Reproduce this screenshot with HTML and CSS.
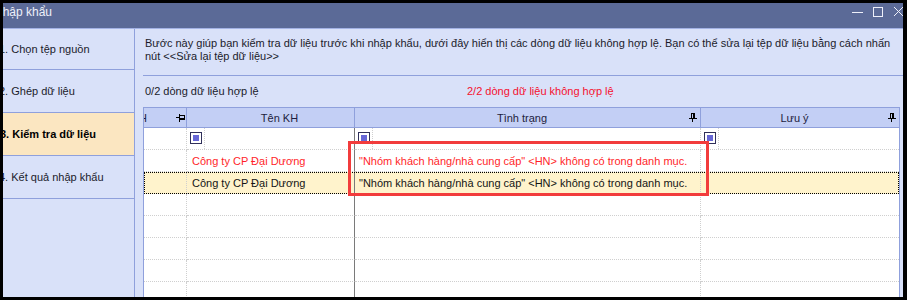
FILE: index.html
```html
<!DOCTYPE html>
<html lang="vi">
<head>
<meta charset="utf-8">
<title>Nhập khẩu</title>
<link rel="stylesheet" href="styles.css">
</head>
<body>
<div class="window">
  <div class="titlebar">
    <span class="title">Nhập khẩu</span>
    <svg class="controls" width="51" height="11" viewBox="0 0 51 11">
      <line x1="0" y1="5.5" x2="11" y2="5.5" stroke="#eef0fa" stroke-width="1"/>
      <rect x="21.5" y="0.5" width="9" height="9" fill="none" stroke="#eef0fa" stroke-width="1"/>
      <path d="M42 0 L51 9 M51 0 L42 9" stroke="#eef0fa" stroke-width="1"/>
    </svg>
  </div>
  <div class="title-sep"></div>
  <div class="main">
    <nav class="nav">
      <div class="nav-item first">1. Chọn tệp nguồn</div>
      <div class="nav-item">2. Ghép dữ liệu</div>
      <div class="nav-item active">3. Kiểm tra dữ liệu</div>
      <div class="nav-item">4. Kết quả nhập khẩu</div>
    </nav>
    <section class="content">
      <p class="desc">Bước này giúp bạn kiểm tra dữ liệu trước khi nhập khẩu, dưới đây hiển thị các dòng dữ liệu không hợp lệ. Bạn có thể sửa lại tệp dữ liệu bằng cách nhấn<br>nút &lt;&lt;Sửa lại tệp dữ liệu&gt;&gt;</p>
      <div class="sep"></div>
      <div class="stats">
        <span class="ok">0/2 dòng dữ liệu hợp lệ</span>
        <span class="bad">2/2 dòng dữ liệu không hợp lệ</span>
      </div>
      <div class="grid">
        <div class="row head">
          <div class="hcell c1">
            <span class="cut">H</span>
            <svg class="hpin" width="9" height="8" viewBox="0 0 9 8">
              <rect x="0" y="3" width="3" height="1"/>
              <rect x="3" y="0" width="1" height="8"/>
              <rect x="4" y="1" width="5" height="1"/>
              <rect x="8" y="1" width="1" height="4"/>
              <rect x="4" y="4" width="5" height="2"/>
            </svg>
          </div>
          <div class="hcell c2"><span class="htext name">Tên KH</span></div>
          <div class="hcell c3">
            <span class="htext">Tình trạng</span>
            <svg class="pin" width="8" height="9" viewBox="0 0 8 9">
              <rect x="2" y="0" width="4" height="1"/>
              <rect x="2" y="0" width="1" height="5"/>
              <rect x="4" y="0" width="2" height="5"/>
              <rect x="0" y="5" width="8" height="1"/>
              <rect x="3" y="6" width="1" height="3"/>
            </svg>
          </div>
          <div class="hcell c4">
            <span class="htext">Lưu ý</span>
            <svg class="pin" width="8" height="9" viewBox="0 0 8 9">
              <rect x="2" y="0" width="4" height="1"/>
              <rect x="2" y="0" width="1" height="5"/>
              <rect x="4" y="0" width="2" height="5"/>
              <rect x="0" y="5" width="8" height="1"/>
              <rect x="3" y="6" width="1" height="3"/>
            </svg>
          </div>
        </div>
        <div class="row filter">
          <div class="cell c1"></div>
          <div class="cell c2"><div class="fcell"><span class="chk"></span></div></div>
          <div class="cell c3"><div class="fcell"><span class="chk"></span></div></div>
          <div class="cell c4"><div class="fcell"><span class="chk"></span></div></div>
        </div>
        <div class="row err">
          <div class="cell c1"></div>
          <div class="cell c2">Công ty CP Đại Dương</div>
          <div class="cell c3">"Nhóm khách hàng/nhà cung cấp" &lt;HN&gt; không có trong danh mục.</div>
          <div class="cell c4"></div>
        </div>
        <div class="row selected">
          <div class="cell c1"></div>
          <div class="cell c2">Công ty CP Đại Dương</div>
          <div class="cell c3">"Nhóm khách hàng/nhà cung cấp" &lt;HN&gt; không có trong danh mục.</div>
          <div class="cell c4"></div>
        </div>
        <div class="row"><div class="cell c1"></div><div class="cell c2"></div><div class="cell c3"></div><div class="cell c4"></div></div>
        <div class="row"><div class="cell c1"></div><div class="cell c2"></div><div class="cell c3"></div><div class="cell c4"></div></div>
        <div class="row"><div class="cell c1"></div><div class="cell c2"></div><div class="cell c3"></div><div class="cell c4"></div></div>
        <div class="row"><div class="cell c1"></div><div class="cell c2"></div><div class="cell c3"></div><div class="cell c4"></div></div>
        <div class="row"><div class="cell c1"></div><div class="cell c2"></div><div class="cell c3"></div><div class="cell c4"></div></div>
        <div class="highlight"></div>
      </div>
    </section>
  </div>
</div>
</body>
</html>
```
FILE: styles.css
```css
* { box-sizing: border-box; }
html, body { margin: 0; padding: 0; }
body {
  background: #000;
  padding: 3px 4px 3px 3px;
  font-family: "Liberation Sans", Arial, sans-serif;
  font-size: 11px;
  color: #1b1b2b;
}
.window {
  width: 900px;
  height: 294px;
  overflow: hidden;
  background: #d9e1f9;
  display: flex;
  flex-direction: column;
}
.titlebar {
  height: 25px;
  flex: none;
  background: #5b6a97;
  display: flex;
  align-items: flex-start;
  padding-top: 1px;
  overflow: hidden;
}
.title {
  margin-left: -9px;
  font-size: 12px;
  line-height: 16px;
  color: #eef0fa;
  white-space: nowrap;
}
.controls {
  margin-left: auto;
  margin-top: 3px;
  flex: none;
}
.title-sep {
  height: 1px;
  flex: none;
  background: #a3b2e4;
}
.main {
  flex: 1;
  display: flex;
  min-height: 0;
}
.nav {
  width: 132px;
  flex: none;
  border-right: 1px solid #8fa0dc;
  overflow: hidden;
}
.nav-item {
  height: 43px;
  border-bottom: 1px solid #8fa0dc;
  display: flex;
  align-items: center;
  text-indent: -4px;
  white-space: nowrap;
  color: #1b1b2b;
}
.nav-item.first { height: 41px; }
.nav-item.active {
  background: #fbe6c1;
  font-weight: bold;
  color: #000;
  text-indent: -3px;
}
.content {
  flex: 1;
  display: flex;
  flex-direction: column;
  min-width: 0;
}
.desc {
  margin: 0;
  padding: 8px 0 0 10px;
  line-height: 13px;
  white-space: nowrap;
}
.sep {
  height: 1px;
  margin: 12px 0 0 8px;
  background: #8fa0dc;
  flex: none;
}
.stats {
  margin-top: 8px;
  padding-left: 10px;
  line-height: 14px;
  display: flex;
  white-space: nowrap;
}
.stats .ok { width: 322px; }
.stats .bad { color: #f5102e; }
.grid {
  position: relative;
  margin: 9px 0 0 8px;
  width: 757px;
  flex: 1;
  border: 1px solid #8fa0dc;
  border-bottom: none;
  background: #fff;
}
.row {
  display: grid;
  grid-template-columns: 43px 168px 346px 198px;
  height: 22px;
}
.row.head {
  height: 20px;
  background: #c3cff5;
  border-bottom: 1px solid #8fa0dc;
}
.hcell {
  display: flex;
  align-items: center;
  border-right: 1px solid #8fa0dc;
  overflow: hidden;
  color: #1d1d40;
  white-space: nowrap;
}
.hcell.c4 { border-right: none; }
.cut { margin-left: -5px; }
.hpin { margin-left: auto; margin-right: 1px; flex: none; }
.htext { flex: 1; text-align: center; }
.htext.name { padding-left: 18px; }
.pin { flex: none; margin-right: 3px; }
.cell {
  border-bottom: 1px dotted #cfcfcf;
  border-right: 1px dotted #cfcfcf;
  display: flex;
  align-items: center;
  padding-left: 4px;
  white-space: nowrap;
  overflow: hidden;
}
.cell.c1 { padding-left: 0; }
.cell.c2 { border-right: 1px solid #7a7a7a; padding-left: 5px; }
.cell.c4 { border-right: none; }
.row.filter .cell { padding-left: 0; align-items: stretch; }
.fcell {
  width: 18px;
  border-right: 1px dotted #cfcfcf;
  padding: 4px 0 0 3px;
}
.chk {
  display: flex;
  align-items: center;
  justify-content: center;
  width: 12px;
  height: 12px;
  border: 1px solid #30305a;
  background: #fff;
}
.chk::after {
  content: "";
  width: 6px;
  height: 6px;
  background: #6767d6;
}
.row.err .cell { color: #ff1f2a; }
.row.selected { outline: 1px dotted #000; outline-offset: -1px; }
.row.selected .cell { background: #fff3cc; color: #141414; }
.highlight {
  position: absolute;
  left: 204px;
  top: 33px;
  width: 361px;
  height: 55px;
  border: 3px solid #f23c3c;
}
```
